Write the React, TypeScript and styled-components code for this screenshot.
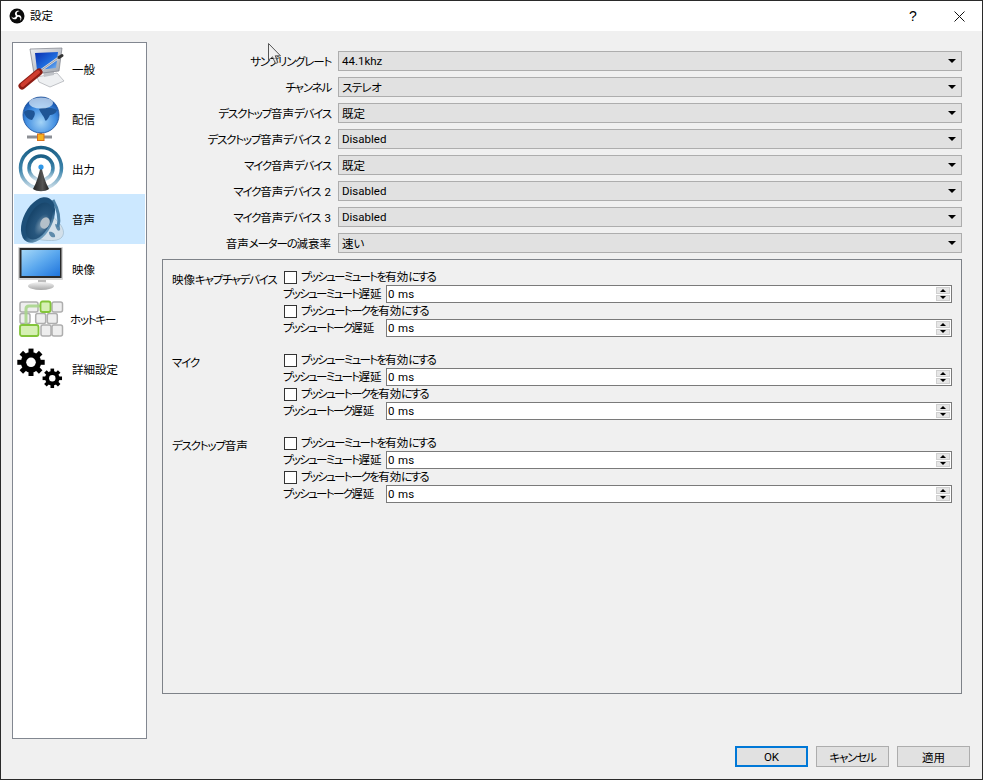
import React from 'react'
import styled, { createGlobalStyle } from 'styled-components'

const GlobalStyle = createGlobalStyle`
  html, body { margin: 0; padding: 0; background: #f0f0f0; }
  body {
    font-family: Roboto, "Noto Sans CJK JP", sans-serif;
    font-size: 11.5px;
    color: #000;
    font-feature-settings: "palt";
  }
  * { box-sizing: border-box; }
`

const Window = styled.div`
  position: relative;
  width: 983px;
  height: 780px;
  border: 1px solid #2a2a2a;
  background: #f0f0f0;
  display: flex;
  flex-direction: column;
  overflow: hidden;
`

const TitleBar = styled.div`
  height: 30px;
  background: #fff;
  display: flex;
  align-items: center;
  padding-left: 8px;
  flex: none;
`
const TitleText = styled.span`
  margin-left: 5px;
  padding-bottom: 2px;
`
const TitleButtons = styled.div`
  margin-left: auto;
  display: flex;
  align-items: center;
`
const HelpGlyph = styled.span`
  font-family: "Liberation Sans", sans-serif;
  font-size: 14px;
  width: 46px;
  text-align: center;
`
const CloseBox = styled.div`
  width: 46px;
  height: 30px;
  display: flex;
  align-items: center;
  justify-content: center;
`

const Content = styled.div`
  flex: none;
  height: 708px;
  display: flex;
  padding: 11px 0 0 11px;
`

const Sidebar = styled.div`
  width: 135px;
  height: 697px;
  background: #fff;
  border: 1px solid #828790;
  padding: 1px;
  flex: none;
`
const NavItem = styled.div<{ selected?: boolean }>`
  height: 50px;
  display: flex;
  align-items: center;
  padding-left: 3px;
  background: ${props => (props.selected ? '#cce8ff' : 'transparent')};
`
const NavLabel = styled.span<{ shift?: number }>`
  margin-left: ${props => 5 + (props.shift || 0)}px;
`

const Main = styled.div`
  margin-left: 15px;
  width: 800px;
  padding-top: 9px;
`
const FormRow = styled.div`
  height: 20px;
  margin-bottom: 6px;
  display: flex;
  align-items: center;
`
const FormLabel = styled.div`
  width: 169px;
  text-align: right;
  white-space: nowrap;
  word-spacing: 1.5px;
`
const Combo = styled.div`
  margin-left: 7px;
  width: 624px;
  height: 20px;
  background: #e1e1e1;
  border: 1px solid #adadad;
  display: flex;
  align-items: center;
  justify-content: space-between;
  padding: 0 5px 0 3px;
`
const ComboArrow = styled.div`
  width: 0;
  height: 0;
  border-left: 4px solid transparent;
  border-right: 4px solid transparent;
  border-top: 4px solid #000;
`

const Group = styled.div`
  height: 435px;
  border: 1px solid #7e8288;
  padding: 9px 0 0 9px;
`
const Section = styled.div`
  display: grid;
  grid-template-columns: 112px 1fr;
  margin-bottom: 15px;
`
const SectionLabel = styled.div`
  line-height: 16px;
  padding-top: 3px;
  white-space: nowrap;
`
const Fields = styled.div`
  display: flex;
  flex-direction: column;
`
const CheckRow = styled.div`
  height: 16px;
  display: flex;
  align-items: center;
`
const CheckBox = styled.div`
  width: 13px;
  height: 13px;
  border: 1px solid #333;
  background: #fff;
  margin-right: 4px;
  flex: none;
`
const CheckText = styled.span`
  padding-bottom: 2px;
`
const SpinRow = styled.div`
  height: 18px;
  display: flex;
  align-items: center;
  margin-left: -1px;
`
const SpinLabel = styled.div`
  width: 103px;
  white-space: nowrap;
  padding-bottom: 3px;
`
const SpinBox = styled.div`
  width: 566px;
  height: 18px;
  background: #fff;
  border: 1px solid #7a7a7a;
  display: flex;
  align-items: center;
  justify-content: space-between;
  padding: 0 1px 0 1px;
`
const SpinValue = styled.span`
  letter-spacing: 0.3px;
`
const SpinButtons = styled.div`
  width: 14px;
  height: 14px;
  display: flex;
  flex-direction: column;
  gap: 1px;
`
const SpinButton = styled.div<{ down?: boolean }>`
  flex: 1;
  background: #e6e6e6;
  border: 1px solid #d0d0d0;
  display: flex;
  align-items: center;
  justify-content: center;
  &::after {
    content: "";
    border-left: 3px solid transparent;
    border-right: 3px solid transparent;
    ${props => (props.down ? 'border-top: 3px solid #000;' : 'border-bottom: 3px solid #000;')}
  }
`

const Footer = styled.div`
  flex: 1;
  display: flex;
  justify-content: flex-end;
  gap: 8px;
  padding: 7px 12px 0 0;
`
const DialogButton = styled.div<{ primary?: boolean }>`
  width: 73px;
  height: 21px;
  background: #e1e1e1;
  border: ${props => (props.primary ? '2px solid #0078d7' : '1px solid #adadad')};
  display: flex;
  align-items: center;
  justify-content: center;
`
const Cursor = styled.svg`
  position: absolute;
  left: 266px;
  top: 41px;
`

// the reference font has narrow kana next to full width kanji
const KanaRun = styled.span<{ squeeze: number }>`
  letter-spacing: ${props => props.squeeze}px;
`
const Jp = ({ text, squeeze = -1.2 }: { text: string; squeeze?: number }) => (
  <>
    {text.split(/([\u3040-\u30ff]+)/).map((part, i) =>
      i % 2 === 1 ? <KanaRun key={i} squeeze={squeeze}>{part}</KanaRun> : part
    )}
  </>
)

const ObsLogo = () => (
  <svg width="16" height="16" viewBox="0 0 16 16">
    <circle cx="8" cy="8" r="7.5" fill="#0a0a0a" />
    {[0, 120, 240].map(a => (
      <path
        key={a}
        d="M8 8.2C5.6 7.6 5.2 4.6 7.4 3.2C8.4 2.6 9.7 2.6 10.6 3.2C9 3 7.6 4 7.8 5.6C7.9 6.6 8.6 7.2 9.2 7.4Z"
        fill="#fff"
        transform={`rotate(${a} 8 8)`}
      />
    ))}
  </svg>
)

const GeneralIcon = () => (
  <svg width="50" height="50" viewBox="0 0 50 50">
    <defs>
      <linearGradient id="gs" x1="0" y1="0" x2="1" y2="1">
        <stop offset="0" stopColor="#0a2fb0" />
        <stop offset="0.6" stopColor="#1f6fe0" />
        <stop offset="1" stopColor="#8fc0ef" />
      </linearGradient>
      <linearGradient id="gm" x1="0" y1="0" x2="1" y2="1">
        <stop offset="0" stopColor="#eceef1" />
        <stop offset="1" stopColor="#9ea3ab" />
      </linearGradient>
    </defs>
    <path d="M20 33L40 29L47 37L33 43L22 38Z" fill="#eef0f2" stroke="#a8abb0" strokeWidth="0.7" />
    <path d="M26 27L37 26L37 31L27 33Z" fill="#c0c3c8" />
    <path d="M13 5L45 4L42 27L17 30Z" fill="url(#gm)" stroke="#7c8088" strokeWidth="0.7" />
    <path d="M18 9L41 8L39 24L20 26Z" fill="url(#gs)" />
    <path d="M23 27L44 12" stroke="#d4d6da" strokeWidth="2.4" strokeLinecap="round" />
    <path d="M23 27L44 12" stroke="#7f838a" strokeWidth="0.7" />
    <path d="M42 13.5L45 11.5" stroke="#333" strokeWidth="3" strokeLinecap="round" />
    <path d="M5 42L22 28" stroke="#8d1d14" strokeWidth="7" strokeLinecap="round" />
    <path d="M5.5 41L21 28" stroke="#cf3d2f" strokeWidth="4" strokeLinecap="round" />
  </svg>
)

const GlobeIcon = () => (
  <svg width="50" height="50" viewBox="0 0 50 50">
    <defs>
      <radialGradient id="gg" cx="0.5" cy="0.7" r="0.7">
        <stop offset="0" stopColor="#a4d4f7" />
        <stop offset="0.6" stopColor="#3f8ce0" />
        <stop offset="1" stopColor="#0d46a0" />
      </radialGradient>
    </defs>
    <path d="M10 43H35" stroke="#8c8f94" strokeWidth="3" />
    <rect x="22.5" y="36" width="2.5" height="6" fill="#777" />
    <circle cx="24" cy="21" r="18" fill="url(#gg)" stroke="#1a4f98" strokeWidth="0.8" />
    <path d="M7 18C10 15 14 16 17 17C19 20 17 23 15 26C12 26 8 23 7 18Z" fill="#1f5596" />
    <path d="M22 15C26 13 33 13 40 16C39 20 35 21 33 21C31 25 29 28 28 26C27 22 24 20 22 15Z" fill="#1f5596" />
    <ellipse cx="24" cy="9" rx="12" ry="5.5" fill="#e3f1fc" opacity="0.7" />
    <rect x="20.5" y="40" width="6.5" height="6.5" fill="#f7b21c" stroke="#d8701a" strokeWidth="1" />
  </svg>
)

const RadioIcon = () => (
  <svg width="50" height="50" viewBox="0 0 50 50">
    <defs>
      <linearGradient id="gr" x1="0" y1="0" x2="0" y2="1">
        <stop offset="0" stopColor="#1a5f86" />
        <stop offset="0.55" stopColor="#3f86ad" />
        <stop offset="1" stopColor="#cfe0ea" />
      </linearGradient>
      <linearGradient id="gt" x1="0" y1="0" x2="1" y2="0">
        <stop offset="0" stopColor="#222" />
        <stop offset="0.6" stopColor="#555" />
        <stop offset="1" stopColor="#222" />
      </linearGradient>
    </defs>
    <circle cx="24" cy="24" r="20.5" fill="none" stroke="url(#gr)" strokeWidth="3.5" />
    <circle cx="24" cy="24" r="12" fill="none" stroke="url(#gr)" strokeWidth="3.5" />
    <path d="M24 21C26 30 28 38 32 45C28 48 20 48 16 45C20 38 22 30 24 21Z" fill="url(#gt)" />
    <circle cx="24" cy="23" r="2.6" fill="#2f97e8" />
  </svg>
)

const SpeakerIcon = () => (
  <svg width="50" height="50" viewBox="0 0 50 50">
    <defs>
      <linearGradient id="gk" x1="0" y1="0" x2="1" y2="0.6">
        <stop offset="0" stopColor="#1d4f78" />
        <stop offset="0.7" stopColor="#1d4f78" />
        <stop offset="1" stopColor="#6f9dbd" />
      </linearGradient>
      <radialGradient id="gc" cx="0.7" cy="0.55" r="0.65">
        <stop offset="0" stopColor="#7f9db4" />
        <stop offset="0.45" stopColor="#27567d" />
        <stop offset="1" stopColor="#18466c" />
      </radialGradient>
    </defs>
    <path d="M30 16L43 30C46 34 48 39 45 43C42 47 34 47 25 46L14 44Z" fill="#d3e0ea" stroke="#8ba8bd" strokeWidth="0.5" />
    <path d="M38 30C41 30 44 33 43 36C41 38 39 35 38 30ZM32 38C35 37 39 40 38 43C35 44 32 42 32 38Z" fill="#4a7ba0" opacity="0.85" />
    <path d="M36 6C41 15 43 25 41 33" fill="none" stroke="#4a7fa5" strokeWidth="3" />
    <ellipse cx="21" cy="26" rx="14.5" ry="24.5" transform="rotate(27 21 26)" fill="url(#gk)" />
    <ellipse cx="22" cy="27" rx="11" ry="20" transform="rotate(27 22 27)" fill="url(#gc)" />
    <ellipse cx="28" cy="29" rx="4.5" ry="6" transform="rotate(27 28 29)" fill="#b4c0c9" />
  </svg>
)

const MonitorIcon = () => (
  <svg width="50" height="50" viewBox="0 0 50 50">
    <defs>
      <linearGradient id="gv" x1="0" y1="0" x2="1" y2="1">
        <stop offset="0" stopColor="#a5d8f8" />
        <stop offset="0.5" stopColor="#5ba8ee" />
        <stop offset="1" stopColor="#1f74dc" />
      </linearGradient>
      <linearGradient id="gb" x1="0" y1="0" x2="0" y2="1">
        <stop offset="0" stopColor="#f4f4f4" />
        <stop offset="1" stopColor="#a8a8a8" />
      </linearGradient>
    </defs>
    <rect x="21" y="35" width="8" height="5" fill="#bdbdbd" />
    <ellipse cx="24" cy="42" rx="13" ry="4" fill="url(#gb)" />
    <rect x="1" y="3" width="45" height="33" rx="1" fill="#d6d6d6" />
    <rect x="2.5" y="4" width="42" height="30" fill="#2a2a2a" />
    <rect x="4.5" y="6" width="38.5" height="26" fill="url(#gv)" />
  </svg>
)

const hotkeyKeys = [
  [3, 8, 18, 10], [35, 8, 10.5, 10],
  [3, 19.5, 10, 10], [18.7, 19.5, 10, 10], [30.3, 19.5, 10, 10],
  [24, 31, 10, 11], [35, 31, 10.5, 11],
]
const HotkeyIcon = () => (
  <svg width="50" height="50" viewBox="0 0 50 50">
    {hotkeyKeys.map(([x, y, w, h], i) => (
      <rect key={i} x={x} y={y} width={w} height={h} rx="2" fill="#eeeeee" stroke="#aeaeae" strokeWidth="1.5" />
    ))}
    <path d="M9 32V15Q9 12 12 12H24" fill="none" stroke="#a9d58c" strokeWidth="3" opacity="0.9" />
    <rect x="23.5" y="7.5" width="10" height="10.5" rx="2" fill="#d6f0b4" stroke="#83c53a" strokeWidth="1.8" />
    <rect x="3" y="31" width="18.5" height="11" rx="2" fill="#d6f0b4" stroke="#83c53a" strokeWidth="1.8" />
  </svg>
)

// teeth are rectangles turned round the middle of the gear
const Gear = ({ cx, cy, r, hole, teeth, w }: { cx: number; cy: number; r: number; hole: number; teeth: number; w: number }) => (
  <g>
    {Array.from({ length: teeth }).map((_, i) => (
      <rect
        key={i}
        x={cx - w / 2}
        y={cy - r - w * 0.7}
        width={w}
        height={w * 1.4}
        fill="#000"
        transform={`rotate(${(360 / teeth) * i} ${cx} ${cy})`}
      />
    ))}
    <circle cx={cx} cy={cy} r={r} fill="#000" />
    <circle cx={cx} cy={cy} r={hole} fill="#fff" />
  </g>
)
const GearsIcon = () => (
  <svg width="50" height="50" viewBox="0 0 50 50">
    <Gear cx={14} cy={18.3} r={10.2} hole={4.8} teeth={8} w={5} />
    <Gear cx={35.3} cy={34.3} r={7.2} hole={3.2} teeth={8} w={3.6} />
  </svg>
)

const navItems = [
  { label: '一般', icon: <GeneralIcon /> },
  { label: '配信', icon: <GlobeIcon /> },
  { label: '出力', icon: <RadioIcon /> },
  { label: '音声', icon: <SpeakerIcon />, selected: true },
  { label: '映像', icon: <MonitorIcon /> },
  { label: 'ホットキー', icon: <HotkeyIcon />, shift: -2 },
  { label: '詳細設定', icon: <GearsIcon /> },
]

const formRows = [
  ['サンプリングレート', '44.1khz'],
  ['チャンネル', 'ステレオ'],
  ['デスクトップ音声デバイス', '既定'],
  ['デスクトップ音声デバイス 2', 'Disabled'],
  ['マイク音声デバイス', '既定'],
  ['マイク音声デバイス 2', 'Disabled'],
  ['マイク音声デバイス 3', 'Disabled'],
  ['音声メーターの減衰率', '速い'],
]

const sections = ['映像キャプチャデバイス', 'マイク', 'デスクトップ音声']

const Spin = ({ label }: { label: string }) => (
  <SpinRow>
    <SpinLabel><Jp text={label} squeeze={-1.7} /></SpinLabel>
    <SpinBox>
      <SpinValue>0 ms</SpinValue>
      <SpinButtons>
        <SpinButton />
        <SpinButton down />
      </SpinButtons>
    </SpinBox>
  </SpinRow>
)

export default function App() {
  return (
    <>
      <GlobalStyle />
      <Window>
        <TitleBar>
          <ObsLogo />
          <TitleText>設定</TitleText>
          <TitleButtons>
            <HelpGlyph>?</HelpGlyph>
            <CloseBox>
              <svg width="11" height="11" viewBox="0 0 11 11">
                <path d="M0.5 0.5L10.5 10.5M10.5 0.5L0.5 10.5" stroke="#111" strokeWidth="1" />
              </svg>
            </CloseBox>
          </TitleButtons>
        </TitleBar>
        <Content>
          <Sidebar>
            {navItems.map(item => (
              <NavItem key={item.label} selected={item.selected}>
                {item.icon}
                <NavLabel shift={item.shift}><Jp text={item.label} /></NavLabel>
              </NavItem>
            ))}
          </Sidebar>
          <Main>
            {formRows.map(([label, value]) => (
              <FormRow key={label}>
                <FormLabel><Jp text={label} /></FormLabel>
                <Combo>
                  <span><Jp text={value} squeeze={-0.6} /></span>
                  <ComboArrow />
                </Combo>
              </FormRow>
            ))}
            <Group>
              {sections.map(name => (
                <Section key={name}>
                  <SectionLabel><Jp text={name} /></SectionLabel>
                  <Fields>
                    <CheckRow><CheckBox /><CheckText><Jp text="プッシューミュートを有効にする" squeeze={-1.7} /></CheckText></CheckRow>
                    <Spin label="プッシューミュート遅延" />
                    <CheckRow><CheckBox /><CheckText><Jp text="プッシュートークを有効にする" squeeze={-1.7} /></CheckText></CheckRow>
                    <Spin label="プッシュートーク遅延" />
                  </Fields>
                </Section>
              ))}
            </Group>
          </Main>
        </Content>
        <Footer>
          <DialogButton primary>OK</DialogButton>
          <DialogButton><Jp text="キャンセル" /></DialogButton>
          <DialogButton>適用</DialogButton>
        </Footer>
        <Cursor width="16" height="24" viewBox="0 0 16 24">
          <path d="M1.5 1.5V18.5L5.5 14.8L8.5 21.5L11 20.5L8.2 13.8H13.5Z" fill="#f0f0f0" fillOpacity="0.75" stroke="#555" strokeWidth="1" />
        </Cursor>
      </Window>
    </>
  )
}
